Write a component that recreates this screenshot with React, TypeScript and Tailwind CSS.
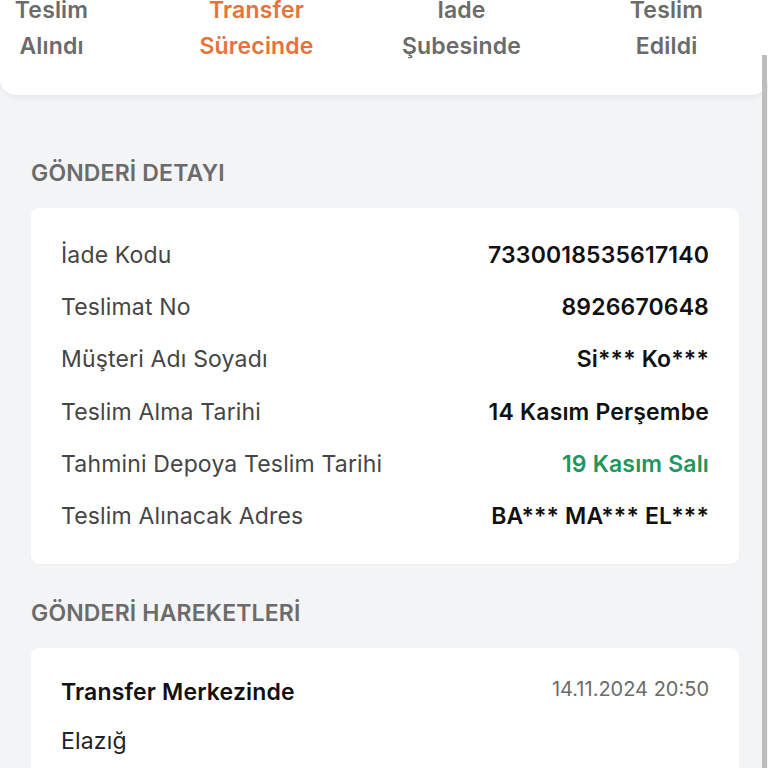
import React from 'react';

const steps = [
  { title: ['Teslim', 'Alındı'], active: false },
  { title: ['Transfer', 'Sürecinde'], active: true },
  { title: ['Iade', 'Şubesinde'], active: false },
  { title: ['Teslim', 'Edildi'], active: false },
];

const details = [
  { label: 'İade Kodu', value: '7330018535617140' },
  { label: 'Teslimat No', value: '8926670648' },
  { label: 'Müşteri Adı Soyadı', value: 'Si*** Ko***' },
  { label: 'Teslim Alma Tarihi', value: '14 Kasım Perşembe' },
  { label: 'Tahmini Depoya Teslim Tarihi', value: '19 Kasım Salı', green: true },
  { label: 'Teslim Alınacak Adres', value: 'BA*** MA*** EL***' },
];

export default function App() {
  return (
    <div className="min-h-[768px] bg-[#f3f4f6] font-['Inter',sans-serif] overflow-hidden tracking-[0.01em]">
      {/* Durum adımları */}
      <div className="bg-white rounded-b-2xl shadow-[0_2px_6px_rgba(0,0,0,0.06)] pb-[31px] overflow-hidden">
        <div className="flex -ml-[51px] -mt-[8px]">
          {steps.map((s, i) => (
            <div
              key={i}
              className={`w-[205px] shrink-0 text-center text-[23px] leading-[36px] font-semibold ${
                s.active ? 'text-[#e5733a]' : 'text-[#6b6b6b]'
              }`}
            >
              <div>{s.title[0]}</div>
              <div>{s.title[1]}</div>
            </div>
          ))}
        </div>
      </div>

      <div className="pl-[31px] pr-[29px]">
        {/* Gönderi detayı */}
        <h2 className="mt-[64px] text-[23px] leading-[28px] font-semibold text-[#6b6b6b]">
          GÖNDERİ DETAYI
        </h2>
        <div className="mt-[21px] bg-white rounded-lg px-[30px] py-[21px] shadow-[0_1px_2px_rgba(0,0,0,0.03)]">
          {details.map((d) => (
            <div key={d.label} className="flex items-center justify-between h-[52.3px] text-[23px]">
              <span className="text-[#454545]">{d.label}</span>
              <span className={`font-semibold ${d.green ? 'text-[#22955d]' : 'text-[#111111]'}`}>
                {d.value}
              </span>
            </div>
          ))}
        </div>

        {/* Gönderi hareketleri */}
        <h2 className="mt-[35px] text-[23px] leading-[28px] font-semibold text-[#6b6b6b]">
          GÖNDERİ HAREKETLERİ
        </h2>
        <div className="mt-[21px] bg-white rounded-lg px-[30px] pt-[30px] pb-[30px] shadow-[0_1px_2px_rgba(0,0,0,0.03)]">
          <div className="flex justify-between items-start">
            <span className="text-[23px] leading-[28px] font-semibold text-[#111111]">
              Transfer Merkezinde
            </span>
            <span className="text-[20px] leading-[22px] tracking-normal text-[#6b6b6b]">
              14.11.2024 20:50
            </span>
          </div>
          <div className="mt-[21px] text-[23px] leading-[28px] text-[#222222]">Elazığ</div>
        </div>
      </div>

      {/* kaydırma çubuğu */}
      <div className="fixed right-[1px] top-[55px] bottom-0 w-[5px] bg-[#bdbdbd]" />
    </div>
  );
}
